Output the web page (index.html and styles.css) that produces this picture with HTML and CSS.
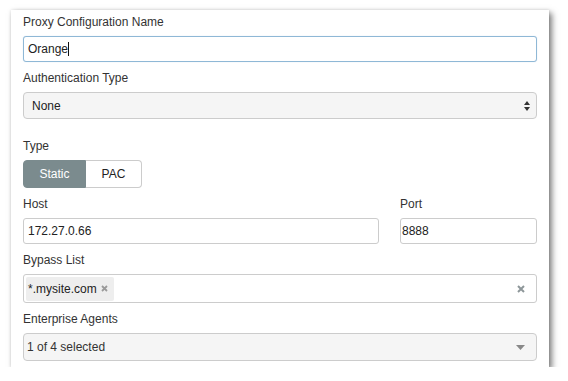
FILE: index.html
```html
<!DOCTYPE html>
<html lang="en">
<head>
  <meta charset="UTF-8">
  <title>Proxy Configuration</title>
  <link rel="stylesheet" href="styles.css">
</head>
<body>

<div class="card">
  <div class="group">
    <label class="label">Proxy Configuration Name</label>
    <div class="field focused">Orange<span class="caret"></span></div>
  </div>

  <div class="group type-gap">
    <label class="label">Authentication Type</label>
    <div class="select">
      <span>None</span>
      <svg class="updown" width="6" height="10" viewBox="0 0 6 10">
        <path d="M3 0 L6 4 L0 4 Z M0 6 L6 6 L3 10 Z" fill="#333"/>
      </svg>
    </div>
  </div>

  <div class="group">
    <label class="label">Type</label>
    <div class="toggle">
      <button class="toggle-btn active">Static</button>
      <button class="toggle-btn">PAC</button>
    </div>
  </div>

  <div class="group row">
    <div>
      <label class="label">Host</label>
      <div class="field">172.27.0.66</div>
    </div>
    <div>
      <label class="label">Port</label>
      <div class="field port">8888</div>
    </div>
  </div>

  <div class="group">
    <label class="label">Bypass List</label>
    <div class="tags">
      <span class="tag">*.mysite.com
        <svg width="7" height="7" viewBox="0 0 7 7"><path d="M1 1 L6 6 M6 1 L1 6" stroke="#9a9a9a" stroke-width="1.8"/></svg>
      </span>
      <svg class="clear" width="8" height="8" viewBox="0 0 8 8"><path d="M1 1 L7 7 M7 1 L1 7" stroke="#8e979a" stroke-width="2"/></svg>
    </div>
  </div>

  <div class="group last">
    <label class="label">Enterprise Agents</label>
    <div class="select multi">
      <span>1 of 4 selected</span>
      <svg width="9" height="5" viewBox="0 0 9 5"><path d="M0 0 L9 0 L4.5 5 Z" fill="#888"/></svg>
    </div>
  </div>
</div>

</body>
</html>
```

FILE: styles.css
```css
* {
  box-sizing: border-box;
  margin: 0;
  padding: 0;
}

body {
  font-family: "Liberation Sans", Arial, sans-serif;
  font-size: 12px;
  color: #333;
  background: #fff;
}

.card {
  margin: 10px 0 0 11px;
  width: 538px;
  padding: 5px 12px 6px;
  background: #fff;
  box-shadow: 3px 3px 6px rgba(0, 0, 0, 0.5), 0 0 3px rgba(0, 0, 0, 0.12);
}

.group {
  margin-bottom: 9px;
}

.group.last {
  margin-bottom: 0;
}

.type-gap {
  margin-bottom: 20px;
}

.label {
  display: block;
  line-height: 15px;
  margin-bottom: 6px;
  color: #333;
}

.field {
  height: 26px;
  line-height: 24px;
  border: 1px solid #ccc;
  border-radius: 3px;
  padding: 0 4px;
  color: #222;
  background: #fff;
}

.field.focused {
  border-color: #8fb8d6;
  box-shadow: 0 0 1px rgba(102, 155, 200, 0.4);
}

.field.port {
  padding-left: 1px;
}

.caret {
  display: inline-block;
  width: 1px;
  height: 14px;
  background: #111;
  vertical-align: -3px;
}

.select {
  display: flex;
  align-items: center;
  justify-content: space-between;
  height: 27px;
  border: 1px solid #ccc;
  border-radius: 4px;
  background: #f5f5f5;
  padding: 0 6px 0 8px;
  color: #222;
}

.select.multi {
  height: 28px;
  padding: 0 11px 0 3px;
  color: #333;
}

.toggle {
  display: flex;
}

.toggle-btn {
  font-family: inherit;
  font-size: 12px;
  height: 28px;
  background: #fff;
  color: #222;
  border: 1px solid #ccc;
  cursor: pointer;
}

.toggle-btn:first-child {
  width: 63px;
  border-radius: 4px 0 0 4px;
}

.toggle-btn:last-child {
  width: 56px;
  border-left: none;
  border-radius: 0 4px 4px 0;
}

.toggle-btn.active {
  background: #7b8b8e;
  border-color: #7b8b8e;
  color: #fff;
}

.row {
  display: grid;
  grid-template-columns: 1fr 137px;
  column-gap: 21px;
}

.tags {
  display: flex;
  align-items: center;
  justify-content: space-between;
  height: 29px;
  border: 1px solid #ccc;
  border-radius: 3px;
  padding: 0 11px 0 2px;
}

.tag {
  display: flex;
  align-items: center;
  gap: 4px;
  height: 24px;
  padding: 0 6px 0 2px;
  background: #eee;
  border-radius: 2px;
  color: #222;
}
```
